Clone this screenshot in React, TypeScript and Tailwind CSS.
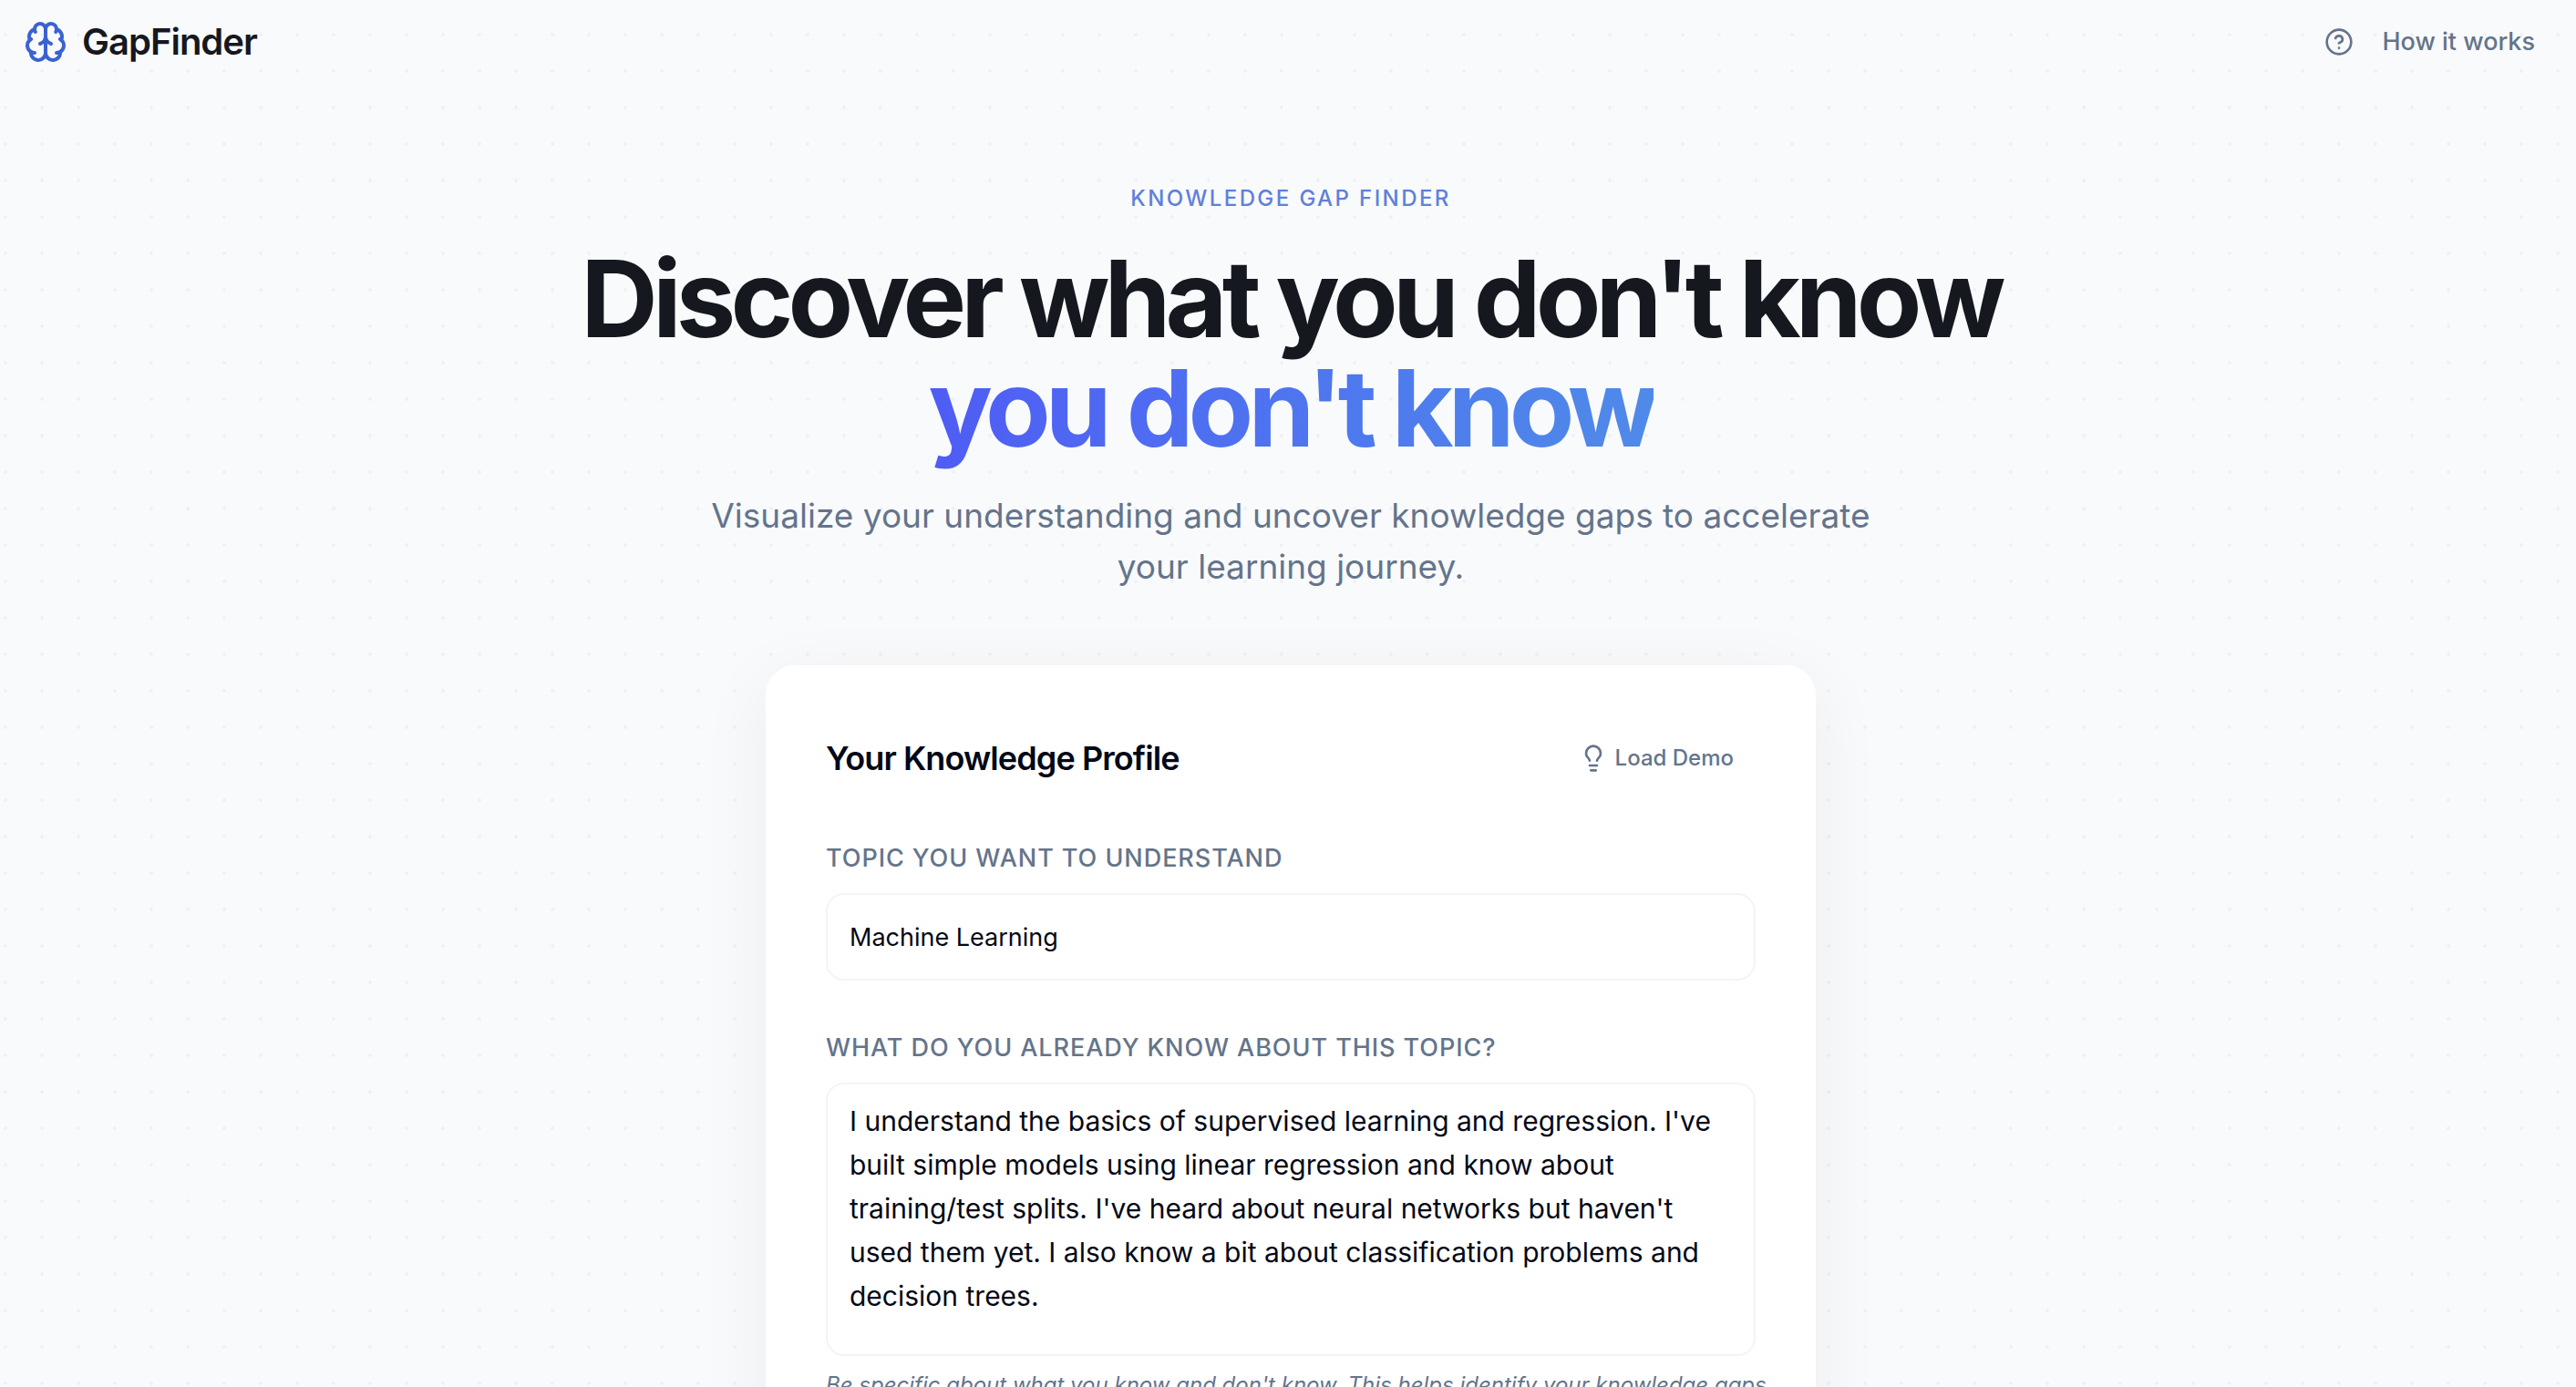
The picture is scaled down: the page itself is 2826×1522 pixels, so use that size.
import { CircleHelp, Lightbulb } from "lucide-react";
import { useState } from "react";

function BrainIcon() {
  return (
    <svg
      className="size-12 text-[#3b62d2]"
      viewBox="0 0 24 24"
      fill="none"
      stroke="currentColor"
      strokeWidth="2"
      strokeLinecap="round"
      strokeLinejoin="round"
      aria-hidden="true"
    >
      <path d="M12 5a3 3 0 1 0-5.997.125 4 4 0 0 0-2.526 5.77 4 4 0 0 0 .556 6.588A4 4 0 1 0 12 18Z" />
      <path d="M12 5a3 3 0 1 1 5.997.125 4 4 0 0 1 2.526 5.77 4 4 0 0 1-.556 6.588A4 4 0 1 1 12 18Z" />
      <path d="M15 13a4.5 4.5 0 0 1-3-4 4.5 4.5 0 0 1-3 4" />
      <path d="M17.599 6.5a3 3 0 0 0 .399-1.375" />
      <path d="M6.003 5.125A3 3 0 0 0 6.401 6.5" />
      <path d="M3.477 10.896a4 4 0 0 1 .585-.396" />
      <path d="M19.938 10.5a4 4 0 0 1 .585.396" />
      <path d="M6 18a4 4 0 0 1-1.967-.516" />
      <path d="M19.967 17.484A4 4 0 0 1 18 18" />
    </svg>
  );
}

function Header() {
  return (
    <header className="flex items-center justify-between pt-[14px] pr-[45px] pl-[26px]">
      <a href="#" className="flex h-16 items-center gap-4 text-[40px] font-semibold tracking-tight text-[#16181f]">
        <BrainIcon />
        GapFinder
      </a>
      <button type="button" className="flex h-16 items-center gap-8 text-[27px] font-medium text-[#64748b]">
        <CircleHelp className="size-8" />
        How it works
      </button>
    </header>
  );
}

function Hero() {
  return (
    <section className="mx-auto flex max-w-[1600px] flex-col items-center text-center">
      <p className="text-[24px] leading-8 font-medium tracking-widest text-[#5f80db]">KNOWLEDGE GAP FINDER</p>
      <h1 className="mt-[34px] text-[117px] leading-[120px] font-bold tracking-tighter text-[#16181f]">
        <span className="block">Discover what you don't know</span>
        <span className="mx-auto -mb-4 block w-fit bg-linear-to-r from-[#4f5cf5] to-[#4f8ae9] bg-clip-text pb-4 text-transparent">
          you don't know
        </span>
      </h1>
      <p className="mt-[30px] max-w-[1344px] text-[37px] leading-[56px] text-[#64748b]">
        Visualize your understanding and uncover knowledge gaps to accelerate your learning journey.
      </p>
    </section>
  );
}

const KNOWN =
  "I understand the basics of supervised learning and regression. I've built simple models using linear regression and know about training/test splits. I've heard about neural networks but haven't used them yet. I also know a bit about classification problems and decision trees.";

function ProfileCard() {
  const [topic, setTopic] = useState("Machine Learning");
  const [known, setKnown] = useState(KNOWN);
  return (
    <section className="mx-auto w-full max-w-[1152px] rounded-[32px] bg-white px-[66px] pt-[66px] pb-16 shadow-[0_16px_80px_rgba(0,0,0,0.06)]">
      <div className="flex h-[72px] items-center justify-between">
        <h2 className="text-[36px] font-semibold tracking-tight text-[#030817]">Your Knowledge Profile</h2>
        <button type="button" className="flex h-[72px] items-center gap-2 px-6 text-[24px] font-medium text-[#64748b]">
          <Lightbulb className="size-8" />
          Load Demo
        </button>
      </div>
      <form className="mt-14 flex flex-col">
        <label htmlFor="topic" className="text-[27px] leading-9 font-medium tracking-[0.035em] text-[#64748b]">
          TOPIC YOU WANT TO UNDERSTAND
        </label>
        <input
          id="topic"
          type="text"
          value={topic}
          onChange={(e) => setTopic(e.target.value)}
          className="mt-5 h-24 w-full rounded-[20px] border-2 border-[#f1f5f9] px-6 text-[27px] text-[#030817]"
        />
        <label htmlFor="known" className="mt-14 text-[27px] leading-9 font-medium tracking-[0.035em] text-[#64748b]">
          WHAT DO YOU ALREADY KNOW ABOUT THIS TOPIC?
        </label>
        <textarea
          id="known"
          value={known}
          onChange={(e) => setKnown(e.target.value)}
          className="mt-5 h-[300px] w-full resize-none rounded-[20px] border-2 border-[#f1f5f9] px-6 py-4 text-[30px] leading-[48px] text-[#030817]"
        />
        <p className="mt-4 -mr-4 text-[24px] leading-8 text-[#64748b] italic">
          Be specific about what you know and don't know. This helps identify your knowledge gaps
          more accurately.
        </p>
      </form>
    </section>
  );
}

export default function App() {
  return (
    <div className="h-screen overflow-hidden bg-[#f9fafc] bg-[radial-gradient(circle,#eff1f4_2px,transparent_2px)] bg-size-[40px_40px] bg-position-[-14px_18px] font-['Inter',sans-serif]">
      <Header />
      <main className="flex flex-col gap-20 pt-[124px] pl-[6px]">
        <Hero />
        <ProfileCard />
      </main>
    </div>
  );
}
